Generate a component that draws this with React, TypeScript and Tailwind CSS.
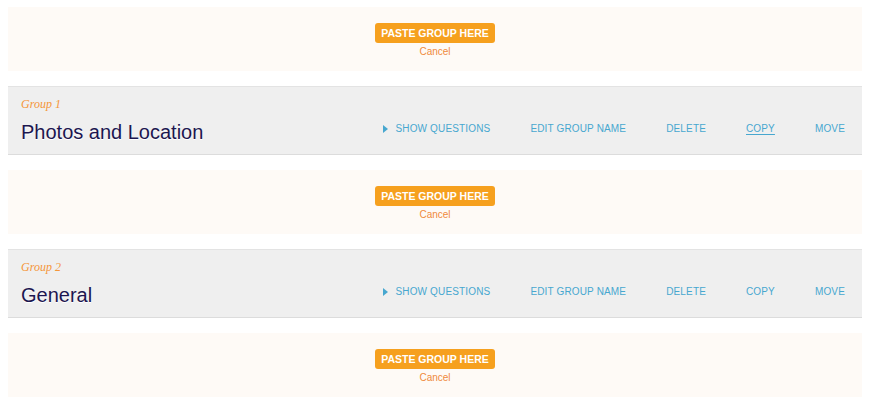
const groups = [
  { label: "Group 1", title: "Photos and Location", copyActive: true },
  { label: "Group 2", title: "General", copyActive: false },
];

function PastePanel() {
  return (
    <div className="h-[64px] bg-[#fefaf6] flex flex-col items-center pt-[16px]">
      <button className="h-[20px] px-[6px] rounded-[3px] bg-[#f6a01e] text-white text-[10.5px] font-bold leading-[20px]">
        PASTE GROUP HERE
      </button>
      <a className="mt-[3px] text-[10px] leading-[12px] text-[#f08a3c] cursor-pointer">Cancel</a>
    </div>
  );
}

function GroupRow({ label, title, copyActive }: { label: string; title: string; copyActive: boolean }) {
  const actions = ["EDIT GROUP NAME", "DELETE", "COPY", "MOVE"];
  return (
    <div className="h-[69px] bg-[#efefef] border-t border-b border-t-[#e3e3e3] border-b-[#dcdcdc] pl-[13px] pr-[17px] pt-[10px]">
      <div className="font-['Liberation_Serif',serif] italic text-[12px] leading-[14px] text-[#f5963a]">{label}</div>
      <div className="flex items-start justify-between mt-[9px]">
        <h2 className="text-[20px] leading-[24px] text-[#1c1650] [text-shadow:0_1px_0_#fff]">{title}</h2>
        <div className="flex items-center gap-10 mt-[3px] text-[10px] leading-[12px] tracking-[0.15px] text-[#47a7cf]">
          <a className="flex items-center gap-[7px] cursor-pointer">
            <svg width="5" height="8" viewBox="0 0 5 8">
              <polygon points="0,0 5,4 0,8" fill="#47a7cf" />
            </svg>
            SHOW QUESTIONS
          </a>
          {actions.map((a) => (
            <a key={a} className={`cursor-pointer ${a === "COPY" && copyActive ? "underline underline-offset-2" : ""}`}>
              {a}
            </a>
          ))}
        </div>
      </div>
    </div>
  );
}

export default function App() {
  return (
    <div className="w-[871px] h-[402px] bg-white font-['Liberation_Sans',Arial,sans-serif] pt-[7px] pl-2">
      <div className="w-[854px] flex flex-col gap-[15px]">
        <PastePanel />
        <GroupRow {...groups[0]} />
        <PastePanel />
        <GroupRow {...groups[1]} />
        <PastePanel />
      </div>
    </div>
  );
}
